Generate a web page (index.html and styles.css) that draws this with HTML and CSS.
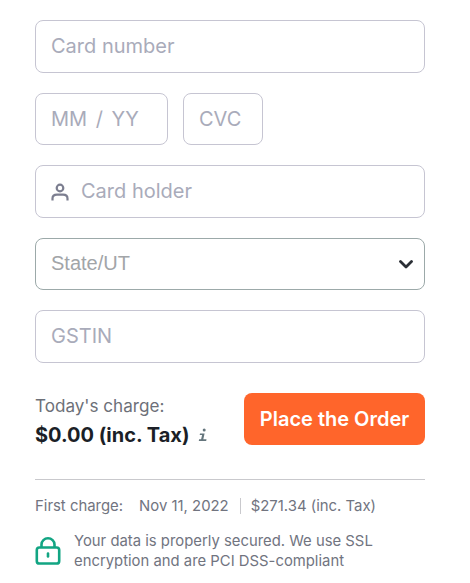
FILE: index.html
```html
<!DOCTYPE html>
<html lang="en">
<head>
<meta charset="utf-8">
<title>Checkout</title>
<link rel="stylesheet" href="styles.css">
</head>
<body>
<form class="form">
  <div class="field tall"><span class="ph">Card number</span></div>
  <div class="row">
    <div class="field short expiry"><span class="ph spaced">MM / YY</span></div>
    <div class="field short cvc"><span class="ph">CVC</span></div>
  </div>
  <div class="field tall with-icon">
    <svg class="user" viewBox="0 0 18 18" width="18" height="18" fill="none" stroke="#7c7e90" stroke-width="2.200" aria-hidden="true"><circle cx="9" cy="5" r="3.300"/><path d="M1.500 17.500v-2C1.500 13 3.500 11.700 6 11.700h6c2.500 0 4.500 1.300 4.500 3.800v2"/></svg>
    <span class="ph">Card holder</span>
  </div>
  <div class="field short select">
    <span class="ph grey">State/UT</span>
    <svg class="chev" viewBox="0 0 14 9" width="14" height="9" fill="none" stroke="#2b2f36" stroke-width="2.800" stroke-linecap="round" stroke-linejoin="round" aria-hidden="true"><path d="M1.500 1.500 7 7l5.500-5.500"/></svg>
  </div>
  <div class="field tall"><span class="ph">GSTIN</span></div>
  <div class="charge">
    <div class="charge-text">
      <div class="today">Today's charge:</div>
      <div class="amount">$0.00 (inc. Tax)
        <svg class="info" viewBox="0 0 10 14" width="10" height="14" fill="#64757c" aria-hidden="true"><circle cx="6.200" cy="2" r="1.500"/><path d="M2 5.400h4.600L5.300 11.300H8.500L8.200 13H.8l.3-1.700h2L4.100 7H1.700z"/></svg>
      </div>
    </div>
    <button class="order" type="button">Place the Order</button>
  </div>
</form>
<hr class="rule">
<div class="first">
  <span>First charge:</span>
  <span class="date">Nov 11, 2022</span>
  <span class="price">$271.34 (inc. Tax)</span>
</div>
<div class="secure">
  <svg class="lock" viewBox="0 0 26 28" width="26" height="28" fill="none" stroke="#12a583" stroke-width="2.600" aria-hidden="true"><rect x="1.800" y="10.500" width="22.400" height="16" rx="2.600"/><path d="M6.500 10.500V7.500a6.500 6.200 0 0 1 13 0v3"/><path d="M13 16.500v3" stroke-linecap="round"/></svg>
  <p>Your data is properly secured. We use SSL<br>encryption and are PCI DSS-compliant</p>
</div>
</body>
</html>
```
FILE: styles.css
```css
* { box-sizing: border-box; }
html, body { margin: 0; padding: 0; background: #fff; }
body {
  width: 470px;
  height: 583px;
  overflow: hidden;
  padding: 20px 45px 0 35px;
  font-family: Inter, "Liberation Sans", sans-serif;
  color: #71747f;
}
.form { display: flex; flex-direction: column; gap: 20px; }
.field {
  display: flex;
  align-items: center;
  padding: 0 15px 2px;
  border: 1px solid #c6c5d2;
  border-radius: 8px;
  background: #fff;
}
.tall { height: 53px; }
.short { height: 52px; }
.row { display: flex; gap: 15px; }
.row .field { padding-bottom: 0; }
.expiry { width: 133px; }
.cvc { width: 80px; }
.ph { font-size: 20px; color: #a9abba; white-space: nowrap; }
.spaced { word-spacing: 3px; }
.with-icon { gap: 12px; }
.user { flex: none; margin-top: 2px; }
.select { justify-content: space-between; border-color: #9ca9a9; padding-right: 11px; }
.chev { margin-top: 2px; }
.ph.grey { color: #a2a5a8; font-family: "Liberation Sans", sans-serif; }
.charge { display: flex; justify-content: space-between; align-items: center; margin-top: 10px; height: 52px; }
.charge-text { padding-top: 4px; }
.today { font-size: 17.100px; line-height: 24px; color: #6d7078; }
.amount { display: flex; align-items: center; gap: 9px; margin-top: 3px; font-size: 20px; line-height: 28px; font-weight: 700; color: #1b1f27; }
.info { flex: none; margin-top: 1px; }
.order {
  width: 181px;
  height: 52px;
  border: 0;
  border-radius: 8px;
  background: #ff652b;
  color: #fff;
  font: 600 20px Inter, "Liberation Sans", sans-serif;
}
.rule { height: 1px; margin: 34px 0 0; border: 0; background: #c9c9cd; }
.first { display: flex; align-items: center; margin-top: 16px; font-size: 14.900px; line-height: 20px; }
.date { margin-left: 16px; padding-right: 11px; border-right: 1px solid #c9c9cd; line-height: 16px; }
.price { margin-left: 10px; }
.secure { display: flex; align-items: center; gap: 13px; margin-top: 15px; }
.lock { flex: none; }
.secure p { margin: 0; font-size: 14.850px; line-height: 20px; }
```
